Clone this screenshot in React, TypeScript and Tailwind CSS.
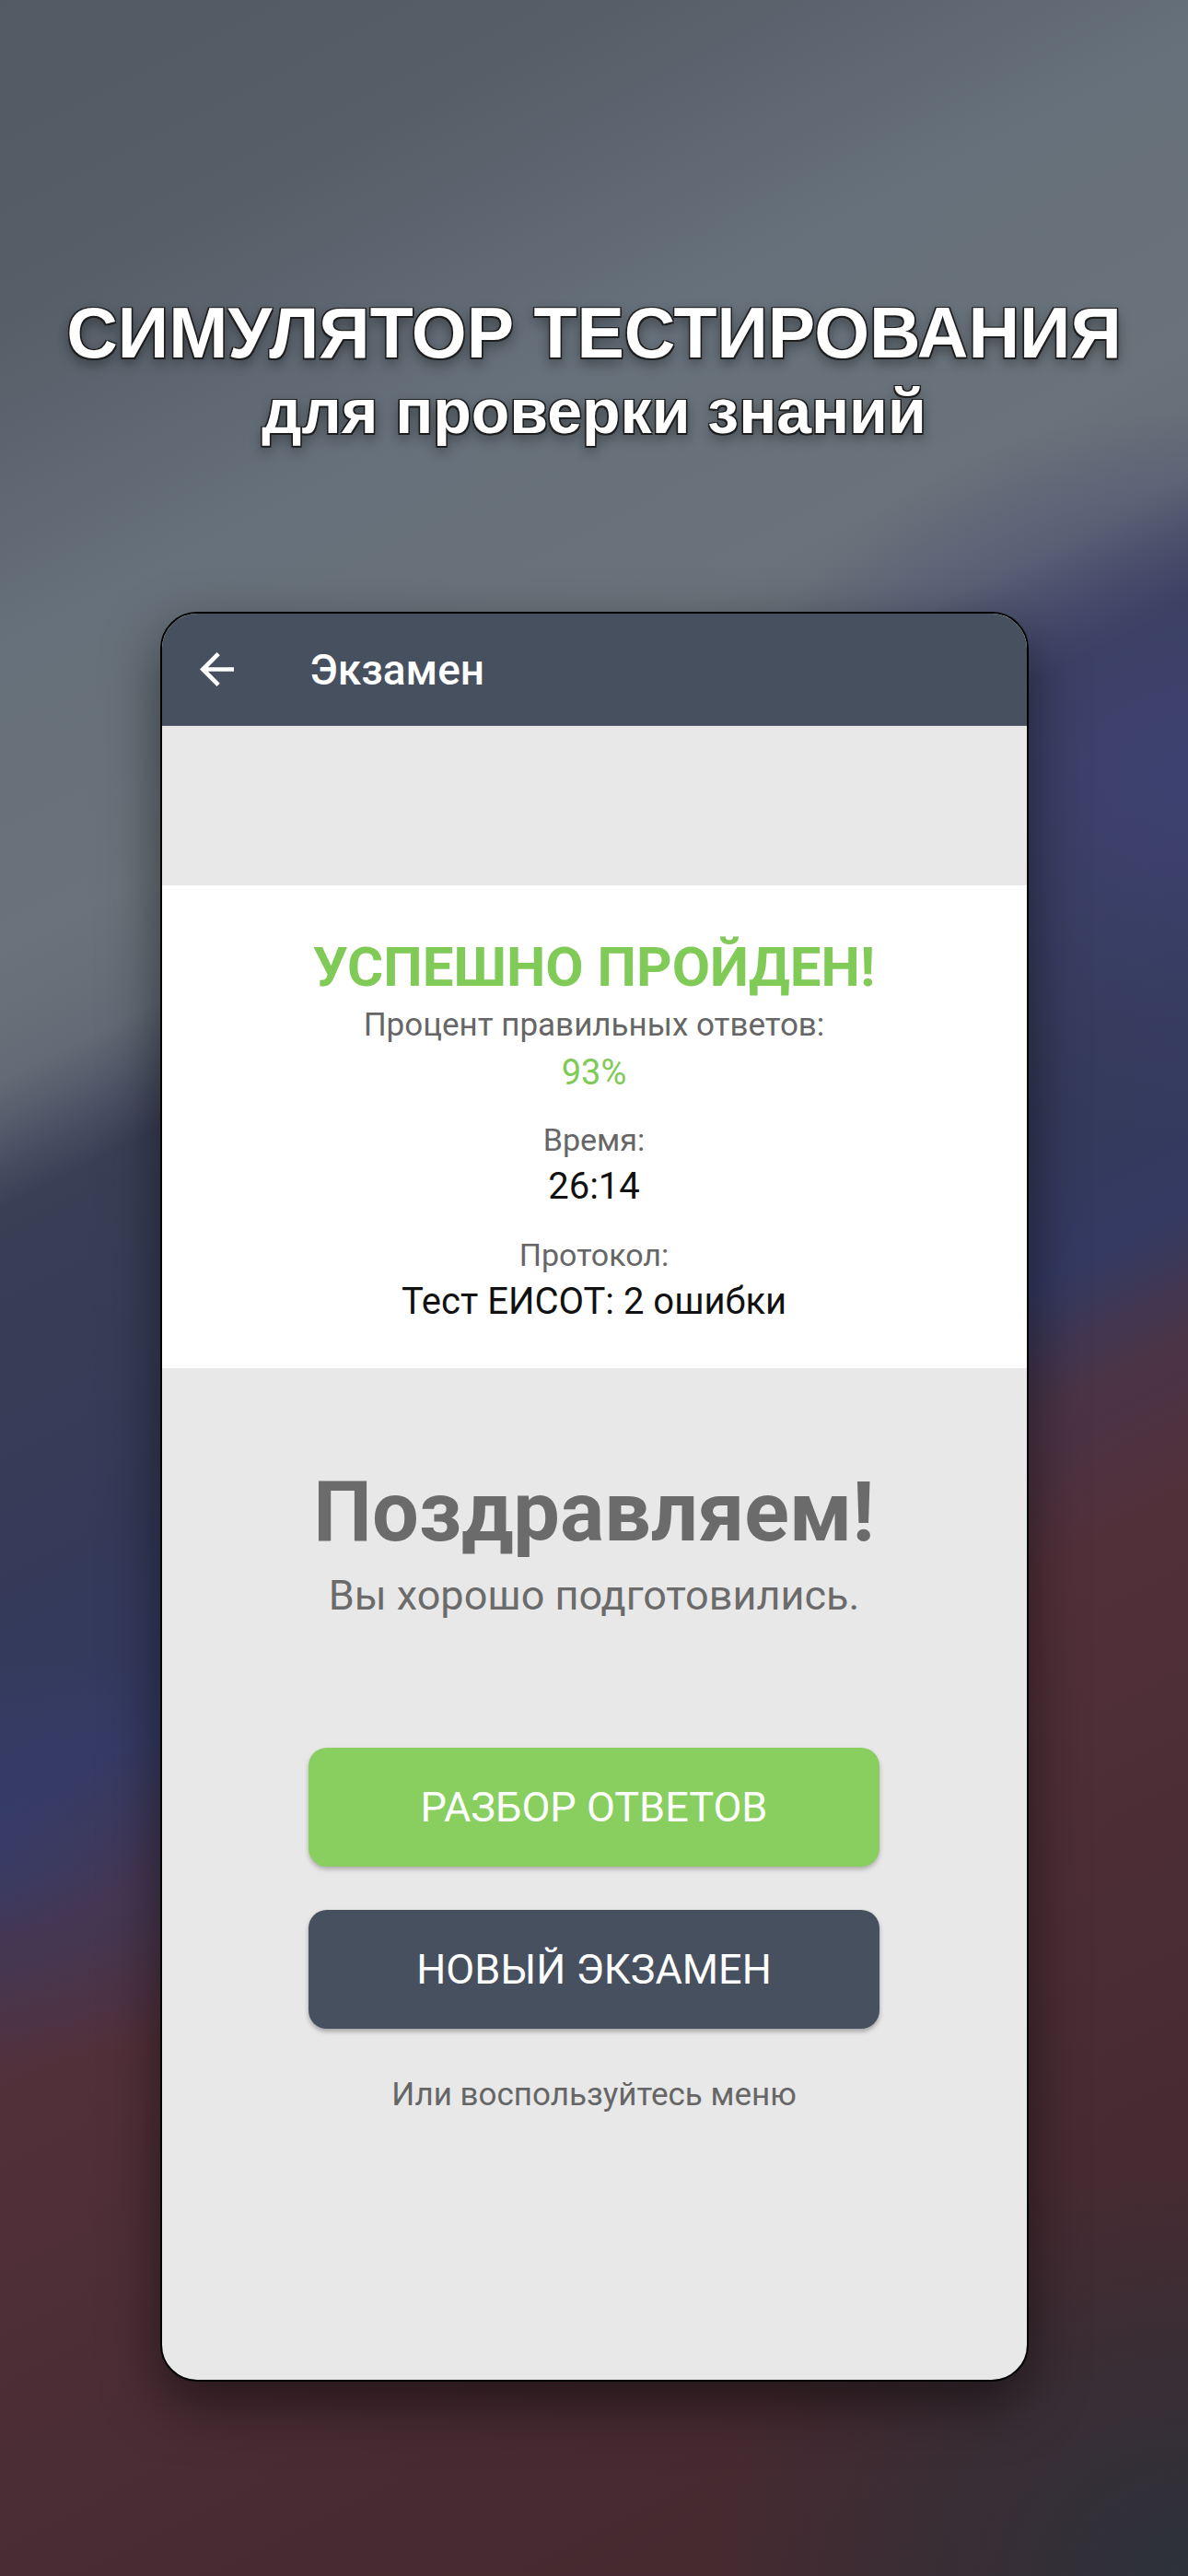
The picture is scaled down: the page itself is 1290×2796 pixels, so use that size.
export default function App() {
    return (
        <div className="w-full h-[2796px] overflow-hidden flex flex-col items-center bg-[radial-gradient(ellipse_38%_14%_at_100%_30%,#3e4274dd,transparent),radial-gradient(ellipse_40%_16%_at_100%_100%,#2d323a,transparent),radial-gradient(ellipse_30%_8%_at_0%_72%,#383e6e99,transparent),linear-gradient(153deg,#525a64_0%,#565e68_10%,#66707a_20%,#6a737b_30%,#636b76_34%,#3a3f56_38%,#343a58_50%,#343a62_57%,#4a3446_61%,#52303a_66%,#472b32_85%,#44292f_100%)]">
            {/* заголовок */}
            <div className="pt-[323px] flex flex-col items-center font-['Liberation_Sans',Arial,sans-serif] font-bold text-white [text-shadow:-1.5px_-1.5px_0_#1e1e1e,1.5px_-1.5px_0_#1e1e1e,-1.5px_1.5px_0_#1e1e1e,1.5px_1.5px_0_#1e1e1e,0_6px_14px_rgba(0,0,0,0.45)]">
                <h1 className="text-[77px] leading-none">СИМУЛЯТОР ТЕСТИРОВАНИЯ</h1>
                <p className="mt-[12px] text-[68px] leading-none">для проверки знаний</p>
            </div>

            {/* телефон */}
            <div className="mt-[184px] w-[943px] h-[1921px] rounded-[40px] border-2 border-black overflow-hidden bg-[#e8e8e8] flex flex-col shadow-[0_24px_60px_rgba(0,0,0,0.5)] font-['Roboto',sans-serif]">
                <div className="h-[122px] shrink-0 bg-[#46505f] flex items-center pl-[41px] border-b border-[#5c6571]">
                    <svg width="37" height="37" viewBox="4 4 16 16" fill="#ffffff">
                        <path d="M20 11H7.83l5.59-5.59L12 4l-8 8 8 8 1.41-1.41L7.83 13H20v-2z" />
                    </svg>
                    <span className="ml-[83px] text-[46px] leading-none font-medium text-white">Экзамен</span>
                </div>

                <div className="h-[173px] shrink-0" />

                {/* результат */}
                <div className="bg-white flex flex-col items-center pt-[59px] pb-[52px] leading-none">
                    <div className="text-[60px] font-bold text-[#80ca57]">УСПЕШНО ПРОЙДЕН!</div>
                    <div className="mt-[15px] text-[35px] text-[#666666]">Процент правильных ответов:</div>
                    <div className="mt-[15px] text-[38px] text-[#80ca57]">93%</div>
                    <div className="mt-[37px] text-[34px] text-[#666666]">Время:</div>
                    <div className="mt-[14px] text-[40px] text-[#111111]">26:14</div>
                    <div className="mt-[37px] text-[34px] text-[#666666]">Протокол:</div>
                    <div className="mt-[14px] text-[40px] text-[#111111]">Тест ЕИСОТ: 2 ошибки</div>
                </div>

                <div className="flex-1 flex flex-col items-center pt-[112px] leading-none">
                    <div className="text-[90px] font-bold text-[#6b6b6b]">Поздравляем!</div>
                    <div className="mt-[22px] text-[45px] text-[#6b6b6b]">Вы хорошо подготовились.</div>

                    <button className="mt-[143px] w-[620px] h-[129px] rounded-[20px] bg-[#88cf5f] text-white text-[45px] shadow-[0_3px_5px_rgba(0,0,0,0.25)]">
                        РАЗБОР ОТВЕТОВ
                    </button>
                    <button className="mt-[47px] w-[620px] h-[129px] rounded-[20px] bg-[#46505f] text-white text-[45px] shadow-[0_3px_5px_rgba(0,0,0,0.3)]">
                        НОВЫЙ ЭКЗАМЕН
                    </button>

                    <div className="mt-[54px] text-[35px] text-[#666666]">Или воспользуйтесь меню</div>
                </div>
            </div>
        </div>
    );
}
